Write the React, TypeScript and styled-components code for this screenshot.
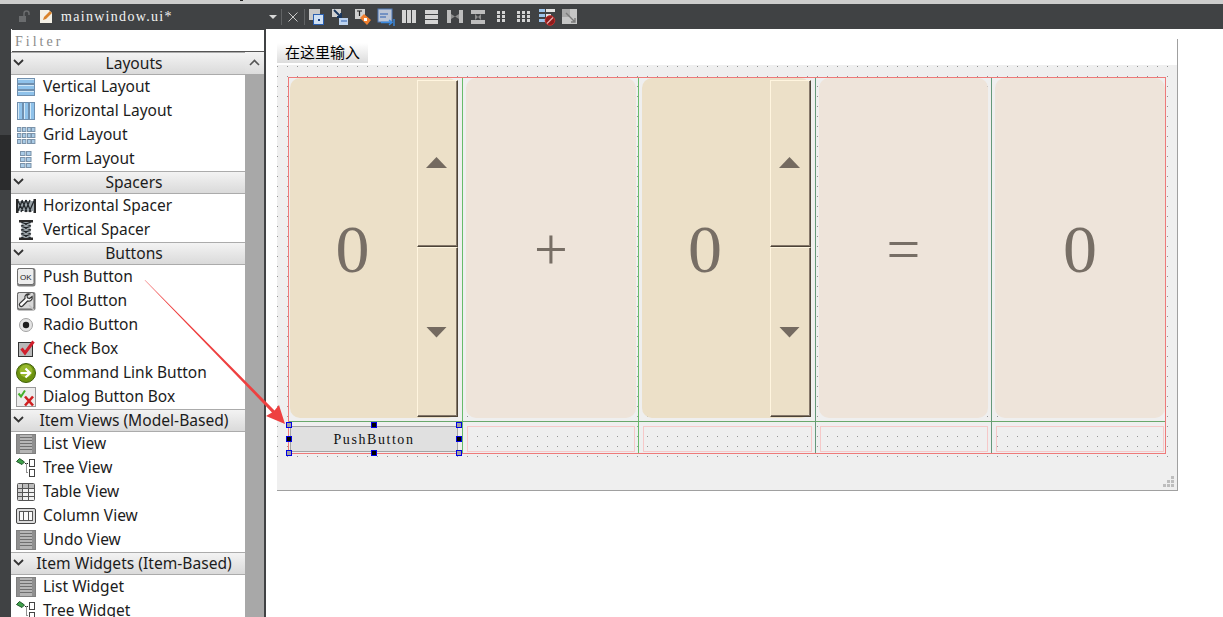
import React from "react";
import styled, { createGlobalStyle } from "styled-components";

const GlobalStyle = createGlobalStyle`
  html, body {
    margin: 0;
    padding: 0;
    background: #fff;
    overflow: hidden;
  }
  * {
    box-sizing: border-box;
  }
`;

const UI_FONT = `"Noto Sans", "Open Sans", sans-serif`;
const CODE_FONT = `"Liberation Serif", serif`;

const Page = styled.div`
  position: relative;
  width: 1223px;
  height: 617px;
  overflow: hidden;
  display: flex;
  flex-direction: column;
  font-family: ${UI_FONT};
`;

const TopStrip = styled.div`
  position: relative;
  height: 4px;
  background: #cdcdcd;
`;

const StripMark = styled.div`
  position: absolute;
  left: 240px;
  top: 0;
  width: 3px;
  height: 1px;
  background: #222;
`;

const Toolbar = styled.div`
  height: 25px;
  background: #404244;
  display: flex;
  align-items: center;
  padding-left: 17px;
`;

const FileName = styled.span`
  width: 208px;
  margin-left: 8px;
  font: 14px ${CODE_FONT};
  letter-spacing: 1.3px;
  color: #f2f2f2;
`;

const Caret = styled.div`
  width: 0;
  height: 0;
  border-left: 4px solid transparent;
  border-right: 4px solid transparent;
  border-top: 4px solid #d8d8d8;
`;

const ToolSep = styled.div<{ $gap: number }>`
  width: 1px;
  height: 16px;
  background: #626466;
  margin-left: ${(p) => p.$gap}px;
`;

const DocIcon = styled.svg`
  margin-left: 9px;
`;

const CloseIcon = styled.svg`
  margin-left: 6px;
`;

const ToolSlot = styled.div`
  width: 23px;
  height: 18px;
  display: flex;
  align-items: center;
  justify-content: center;
`;

const Body = styled.div`
  flex: 1;
  display: flex;
  min-height: 0;
`;

const Rail = styled.div`
  width: 11px;
  display: flex;
  flex-direction: column;
  background: #404244;
`;

const RailDark = styled.div`
  margin-top: 106px;
  height: 55px;
  background: #2b2c2d;
`;

const Sidebar = styled.div`
  width: 255px;
  display: flex;
  flex-direction: column;
  background: #fff;
  border-right: 2px solid #404244;
  overflow: hidden;
`;

const Filter = styled.div`
  height: 23px;
  padding: 4px 0 0 3px;
  border-top: 1px solid #404244;
  border-bottom: 1px solid #555;
  margin-left: 1px;
  font: 14px ${CODE_FONT};
  letter-spacing: 3px;
  color: #8a8a8a;
  background: #fff;
`;

const BoxWrap = styled.div`
  flex: 1;
  display: flex;
  min-height: 0;
`;

const List = styled.div`
  width: 234px;
`;

const CategoryHead = styled.div`
  position: relative;
  height: 23px;
  padding-left: 12px;
  text-align: center;
  font-size: 15.6px;
  line-height: 20px;
  color: #1c1c1c;
  background: linear-gradient(#f3f3f3, #dadada);
  border-top: 1px solid #ababab;
  border-bottom: 1px solid #ababab;
`;

const Chevron = styled.svg`
  position: absolute;
  left: 2px;
  top: 6px;
`;

const Row = styled.div`
  height: 24px;
  display: flex;
  align-items: center;
  padding-left: 5px;
  gap: 7px;
  font-size: 15.5px;
  color: #1c1c1c;
  white-space: nowrap;
`;

const RowLabel = styled.span`
  margin-top: -2px;
`;

const IconBox = styled.svg`
  flex: none;
`;

const ScrollTrack = styled.div`
  flex: 1;
  background: #a8a8a8;
`;

const ScrollUp = styled.div`
  height: 22px;
  display: flex;
  align-items: center;
  justify-content: center;
  background: linear-gradient(#f3f3f3, #dcdcdc);
`;

const Canvas = styled.div`
  flex: 1;
  padding: 10px 0 0 11px;
  background: #fff;
`;

const FormWindow = styled.div`
  position: relative;
  width: 901px;
  height: 452px;
  display: flex;
  flex-direction: column;
  border-right: 1px solid #a0a0a0;
  border-bottom: 1px solid #a0a0a0;
`;

const MenuBar = styled.div`
  height: 26px;
  padding-top: 4px;
`;

const MenuItem = styled.div`
  width: 91px;
  height: 20px;
  padding-left: 8px;
  font: 15px/18px "Noto Sans CJK SC", sans-serif;
  color: #000;
  background: linear-gradient(#fff, #dcdcdc);
`;

const FormBody = styled.div`
  flex: 1;
  background: #efefef;
`;

const DotField = styled.div`
  width: 891px;
  height: 392px;
  padding: 12px 0 0 11px;
  background-image: radial-gradient(circle at 0.5px 0.5px, #959595 0.72px, transparent 0.72px);
  background-size: 10px 10px;
  background-position: 0 1px;
`;

const LayoutGrid = styled.div`
  position: relative;
  width: 878px;
  height: 377px;
  display: grid;
  grid-template-columns: 174px 176px 177px 176px 173px;
  grid-template-rows: 344px 31px;
  border: 1px solid #ee7a7a;
`;

const Cell = styled.div<{ $left: number; $right: number; $dim?: boolean; $last?: boolean; $top?: boolean }>`
  display: flex;
  min-width: 0;
  padding: ${(p) => (p.$top ? "0 0 3px" : "4px 0 1px")};
  padding-left: ${(p) => p.$left}px;
  padding-right: ${(p) => p.$right}px;
  border-right: ${(p) => (p.$last ? "0" : `1px solid ${p.$dim ? "#65987a" : "#68bb6a"}`)};
  border-bottom: ${(p) => (p.$top ? "1px solid #6aa86c" : "0")};
`;

const Tile = styled.div<{ $warm?: boolean }>`
  flex: 1;
  min-width: 0;
  display: flex;
  border-radius: 10px;
  background: ${(p) => (p.$warm ? "#ece0c8" : "#eee4da")};
`;

const Value = styled.div<{ $size?: number }>`
  flex: 1;
  display: flex;
  align-items: center;
  justify-content: center;
  padding-top: 2px;
  font-family: "Liberation Serif", serif;
  font-size: ${(p) => p.$size ?? 68}px;
  color: #776e65;
`;

const Spin = styled.div`
  width: 41px;
  margin: 2px 0 1px 2px;
  display: flex;
  flex-direction: column;
`;

const SpinButton = styled.div<{ $grow: number }>`
  flex: ${(p) => p.$grow} 0 0;
  display: flex;
  justify-content: center;
  align-items: center;
  border-top: 1px solid #fff5df;
  border-left: 1px solid #fff5df;
  border-right: 1px solid #4c4337;
  border-bottom: 1px solid #4c4337;
  box-shadow: inset -1px -1px 0 #85786a;
`;

const Arrow = styled.div<{ $down?: boolean }>`
  width: 21px;
  height: 11px;
  margin-right: 2px;
  background: #746a60;
  clip-path: ${(p) =>
    p.$down ? "polygon(0 0, 100% 0, 50% 100%)" : "polygon(50% 0, 100% 100%, 0 100%)"};
  margin-top: ${(p) => (p.$down ? 0 : -2)}px;
`;

const PushButton = styled.div`
  flex: 1;
  display: flex;
  align-items: center;
  justify-content: center;
  padding-top: 2px;
  background: #e0e0e0;
  border: 1px solid #a4a4a4;
  font: 14px ${CODE_FONT};
  letter-spacing: 1.56px;
  color: #111;
`;

const Placeholder = styled.div`
  flex: 1;
  border: 1px solid #f6c8c8;
`;

const Handle = styled.div<{ $corner?: boolean; $x: number; $y: number }>`
  position: absolute;
  left: ${(p) => p.$x}px;
  top: ${(p) => p.$y}px;
  width: 6px;
  height: 6px;
  border: 1px solid #0000e6;
  background: ${(p) => (p.$corner ? "#a0a0a0" : "#000")};
`;

const Grip = styled.svg`
  position: absolute;
  right: 3px;
  bottom: 3px;
`;

const Overlay = styled.svg`
  position: absolute;
  left: 0;
  top: 0;
  pointer-events: none;
`;

/* sidebar icons, 20x20 */
const Ico: React.FC<{ children: React.ReactNode }> = ({ children }) => (
  <IconBox width="20" height="20" viewBox="0 0 20 20">
    {children}
  </IconBox>
);

const VBoxIcon = () => (
  <Ico>
    {[1, 7, 13].map((y) => (
      <g key={y}>
        <rect x="1.5" y={y + 0.5} width="17" height="5" fill="#8fc2ea" stroke="#6f8fae" />
        <rect x="2" y={y + 1} width="16" height="1" fill="#d3e9f8" />
      </g>
    ))}
  </Ico>
);
const HBoxIcon = () => (
  <Ico>
    {[1, 7, 13].map((x) => (
      <g key={x}>
        <rect x={x + 0.5} y="1.5" width="5" height="17" fill="#8fc2ea" stroke="#6f8fae" />
        <rect x={x + 1} y="2" width="1" height="16" fill="#d3e9f8" />
      </g>
    ))}
  </Ico>
);
const GridIcon = () => (
  <Ico>
    {[2, 8, 14].map((y) =>
      [1, 6, 11, 15].map((x) => (
        <rect key={`${x}-${y}`} x={x + 0.5} y={y + 0.5} width="3.4" height="4" fill="#a9cbe6" stroke="#7b93aa" />
      ))
    )}
  </Ico>
);
const FormIcon = () => (
  <Ico>
    {[2, 8, 14].map((y) =>
      [4, 10].map((x) => (
        <rect key={`${x}-${y}`} x={x + 0.5} y={y + 0.5} width="4.5" height="4" fill="#a9cbe6" stroke="#7b93aa" />
      ))
    )}
  </Ico>
);
const HSpacerIcon = () => (
  <Ico>
    <rect x="0" y="3" width="2.5" height="14" fill="#2a2a2a" />
    <rect x="17.5" y="3" width="2.5" height="14" fill="#2a2a2a" />
    <path d="M2 5h16v10H2z" fill="#9aa3a8" />
    <path d="M2 15l4-10M5 16l5-12M9 16l5-12M13 16l5-11M2 5l5 10M6 4l5 12M10 4l5 12" stroke="#23282c" strokeWidth="1.3" fill="none" />
  </Ico>
);
const VSpacerIcon = () => (
  <Ico>
    <rect x="3" y="0" width="14" height="2.5" fill="#2a2a2a" />
    <rect x="3" y="17.5" width="14" height="2.5" fill="#2a2a2a" />
    <path d="M5.5 2h9v16h-9z" fill="#9aa3a8" />
    <path d="M5 6l10-4M5 10l10-4M5 14l10-4M5 18l10-4M5 2l10 4M5 6l10 4M5 10l10 4M5 14l10 4" stroke="#23282c" strokeWidth="1.3" fill="none" />
  </Ico>
);
const OkIcon = () => (
  <Ico>
    <rect x="1" y="1" width="18.5" height="18.5" rx="2.5" fill="#7f7f7f" />
    <rect x="1.5" y="1.5" width="16.5" height="16" rx="2" fill="#ededed" stroke="#6d6d6d" />
    <text x="9.8" y="12.5" textAnchor="middle" fontSize="8" fontFamily="Liberation Sans, sans-serif" fill="#222">
      OK
    </text>
  </Ico>
);
const ToolIcon = () => (
  <Ico>
    <rect x="1" y="1" width="18.5" height="18.5" rx="2" fill="#858585" />
    <rect x="1.5" y="1.5" width="16.5" height="16.5" rx="2" fill="#d8d8d8" stroke="#666" />
    <path d="M13.5 3c-3-.6-5.2 1.6-4.5 4.5L3.8 12.4c-1.5 1.8 1 4.2 2.8 2.6l5-5c3 .7 5.2-1.6 4.5-4.5l-2.5 2-2.2-.7-.4-2.2z" fill="#fafafa" stroke="#333" strokeWidth="1.2" />
    <path d="M13 14l5 5" stroke="#c4c4c4" strokeWidth="1.5" />
  </Ico>
);
const RadioIcon = () => (
  <Ico>
    <circle cx="10" cy="10" r="6.5" fill="#e4e4e4" stroke="#a3a3a3" />
    <circle cx="10" cy="10" r="3.2" fill="#1d1d1d" />
  </Ico>
);
const CheckIcon = () => (
  <Ico>
    <rect x="2.5" y="3.5" width="14" height="14" fill="#b8b8b8" stroke="#333" />
    <path d="M5.5 9.5l3.5 4.5L17.5 2.5" fill="none" stroke="#d01f2c" strokeWidth="3" />
  </Ico>
);
const LinkIcon = () => (
  <Ico>
    <circle cx="10" cy="10" r="9.5" fill="#6d9310" stroke="#41600a" strokeWidth="1" />
    <circle cx="10" cy="8" r="6.5" fill="#a9c83a" opacity="0.7" />
    <path d="M4.5 10h9M9.5 5.5l4.5 4.5-4.5 4.5" fill="none" stroke="#fff" strokeWidth="2.2" />
  </Ico>
);
const DialogIcon = () => (
  <Ico>
    <rect x="0.5" y="0.5" width="19" height="19" fill="#ececec" stroke="#9a9a9a" />
    <path d="M2.5 6.5l2.5 3 4-6" fill="none" stroke="#45b02b" strokeWidth="2" />
    <path d="M9 9.5l8 9M17 9.5l-8 9" stroke="#cf1f20" strokeWidth="2.6" />
  </Ico>
);
const ListIcon = () => (
  <Ico>
    <rect x="0.5" y="0.5" width="19" height="19" fill="#b5b5b5" stroke="#7f7f7f" />
    <rect x="1" y="1" width="3" height="18" fill="#8f8f8f" />
    <rect x="16" y="1" width="3" height="18" fill="#8f8f8f" />
    {[3, 6, 9, 12, 15].map((y) => (
      <rect key={y} x="4" y={y} width="12" height="1" fill="#6f6f6f" />
    ))}
  </Ico>
);
const TreeIcon = () => (
  <Ico>
    <path d="M0.5 3.5l3-3 5 3.5-2.5 2.5z" fill="#3fa14a" stroke="#20552a" />
    <path d="M9 5.5h3M10.5 5.5v9H12" stroke="#222" strokeDasharray="1 1" fill="none" />
    <rect x="13.5" y="1.5" width="5" height="7" fill="#fff" stroke="#444" />
    <rect x="13.5" y="11.5" width="5" height="7" fill="#fff" stroke="#444" />
  </Ico>
);
const TableIcon = () => (
  <Ico>
    <rect x="1.5" y="1.5" width="17" height="17" rx="1" fill="#f2f2f2" stroke="#555" />
    <rect x="2" y="2" width="16" height="4" fill="#bcbcbc" />
    <rect x="2" y="2" width="4" height="16" fill="#cfcfcf" />
    <path d="M6.5 2v16M12.5 2v16M2 6.5h16M2 10.5h16M2 14.5h16" stroke="#555" />
  </Ico>
);
const ColumnIcon = () => (
  <Ico>
    <rect x="0.5" y="2.5" width="19" height="15" rx="1.5" fill="#dcdcdc" stroke="#444" />
    <rect x="3.5" y="5.5" width="13" height="9" fill="#fafafa" stroke="#555" />
    <path d="M7.5 5.5v9M12.5 5.5v9" stroke="#555" />
  </Ico>
);

/* toolbar icons */
const Tb: React.FC<{ children: React.ReactNode }> = ({ children }) => (
  <IconBox width="18" height="18" viewBox="0 0 18 18">
    {children}
  </IconBox>
);
const EditTool = () => (
  <Tb>
    <rect x="1" y="1" width="11" height="11" fill="#c8c8c8" />
    <rect x="5.5" y="6.5" width="10" height="10" fill="#cfe0f4" stroke="#2a5fb0" />
    <rect x="10" y="11" width="2" height="2" fill="#1a3f80" />
  </Tb>
);
const SignalTool = () => (
  <Tb>
    <rect x="1" y="1" width="9" height="8" fill="#d0d0d0" />
    <rect x="8" y="10" width="9" height="7" fill="#bcd2ee" />
    <path d="M3 2l7 7M10 5v4H6" fill="none" stroke="#17355f" strokeWidth="1.8" />
    <path d="M10 13h6" stroke="#2a5fb0" />
  </Tb>
);
const BuddyTool = () => (
  <Tb>
    <rect x="1" y="1" width="10" height="10" fill="#d0d0d0" />
    <path d="M3 3h5M5.5 3v5" stroke="#222" strokeWidth="1.2" />
    <path d="M6 10l4-4 7 6-4 5z" fill="#f08030" />
    <rect x="10" y="10" width="3" height="3" fill="#fff" />
  </Tb>
);
const TabTool = () => (
  <Tb>
    <rect x="1" y="1" width="14" height="13" fill="#bcc6d6" stroke="#4f78b8" />
    <path d="M3 6h8M3 9h6" stroke="#2a5fb0" />
    <path d="M4 14.5h11M12 12l3 2.5-3 2.5M17 11v7" fill="none" stroke="#3a8ae0" strokeWidth="1.4" />
  </Tb>
);
const BarsH = () => (
  <Tb>
    {[2, 7, 12].map((x) => (
      <rect key={x} x={x} y="2" width="4" height="13" fill="#d4d4d4" />
    ))}
  </Tb>
);
const BarsV = () => (
  <Tb>
    {[2, 7, 12].map((y) => (
      <rect key={y} x="2" y={y} width="13" height="4" fill="#d4d4d4" />
    ))}
  </Tb>
);
const SplitH = () => (
  <Tb>
    <rect x="1" y="2" width="4" height="13" fill="#bdbdbd" />
    <rect x="13" y="2" width="4" height="13" fill="#bdbdbd" />
    <path d="M5 6l4 2.5 4-2.5v5l-4-2.5-4 2.5z" fill="#8e8e8e" />
  </Tb>
);
const SplitV = () => (
  <Tb>
    <rect x="2" y="2" width="14" height="4" fill="#bdbdbd" />
    <rect x="2" y="12" width="14" height="4" fill="#bdbdbd" />
    <path d="M6 6l3 3 3-3v6l-3-3-3 3z" fill="#8e8e8e" />
  </Tb>
);
const DotsTool: React.FC<{ xs: number[]; ys: number[] }> = ({ xs, ys }) => (
  <Tb>
    {ys.map((y) =>
      xs.map((x) => <rect key={`${x}-${y}`} x={x} y={y} width="3" height="3" fill="#d4d4d4" />)
    )}
  </Tb>
);
const BreakTool = () => (
  <Tb>
    <rect x="1" y="1" width="6" height="3" fill="#9cc3ea" />
    <rect x="8" y="1" width="9" height="3" fill="#e2e2e2" />
    <rect x="1" y="6" width="6" height="3" fill="#9cc3ea" />
    <rect x="8" y="6" width="5" height="3" fill="#e2e2e2" />
    <rect x="1" y="11" width="6" height="3" fill="#9cc3ea" />
    <circle cx="12" cy="12.5" r="4.8" fill="#8e1c1c" stroke="#c73030" />
    <path d="M9 15.5l6-6" stroke="#e8b0b0" strokeWidth="1.3" />
  </Tb>
);
const AdjustTool = () => (
  <Tb>
    <rect x="1" y="1" width="15" height="15" fill="#c6c6c6" />
    <rect x="1" y="1" width="8" height="8" fill="#a8a8a8" />
    <path d="M5 5l9 9M14 10v4h-4" fill="none" stroke="#7a7a7a" strokeWidth="1.4" />
  </Tb>
);

const CATEGORIES: { title: string; rows: [string, React.FC][] }[] = [
  {
    title: "Layouts",
    rows: [
      ["Vertical Layout", VBoxIcon],
      ["Horizontal Layout", HBoxIcon],
      ["Grid Layout", GridIcon],
      ["Form Layout", FormIcon],
    ],
  },
  {
    title: "Spacers",
    rows: [
      ["Horizontal Spacer", HSpacerIcon],
      ["Vertical Spacer", VSpacerIcon],
    ],
  },
  {
    title: "Buttons",
    rows: [
      ["Push Button", OkIcon],
      ["Tool Button", ToolIcon],
      ["Radio Button", RadioIcon],
      ["Check Box", CheckIcon],
      ["Command Link Button", LinkIcon],
      ["Dialog Button Box", DialogIcon],
    ],
  },
  {
    title: "Item Views (Model-Based)",
    rows: [
      ["List View", ListIcon],
      ["Tree View", TreeIcon],
      ["Table View", TableIcon],
      ["Column View", ColumnIcon],
      ["Undo View", ListIcon],
    ],
  },
  {
    title: "Item Widgets (Item-Based)",
    rows: [
      ["List Widget", ListIcon],
      ["Tree Widget", TreeIcon],
    ],
  },
];

const HANDLES: [number, number, boolean][] = [
  [-3, 344, true],
  [82, 344, false],
  [167, 344, true],
  [-3, 358, false],
  [167, 358, false],
  [-3, 372, true],
  [82, 372, false],
  [167, 372, true],
];

const Stepper = () => (
  <Spin>
    <SpinButton $grow={167}>
      <Arrow />
    </SpinButton>
    <SpinButton $grow={170}>
      <Arrow $down />
    </SpinButton>
  </Spin>
);

export default function App() {
  return (
    <Page>
      <GlobalStyle />
      <TopStrip>
        <StripMark />
      </TopStrip>
      <Toolbar>
        <svg width="13" height="13" viewBox="0 0 13 13">
          <path d="M2 6h7v6H2z" fill="#6a6c6e" />
          <path d="M7 6V3.5a2.5 2.5 0 0 1 5 0V5" fill="none" stroke="#6a6c6e" strokeWidth="1.5" />
        </svg>
        <DocIcon width="14" height="15" viewBox="0 0 14 15">
          <path d="M1 1h9l3 3v10H1z" fill="#f4f0e6" />
          <path d="M4 11l1-3 6-6 2 2-6 6z" fill="#d9822b" />
        </DocIcon>
        <FileName>mainwindow.ui*</FileName>
        <Caret />
        <ToolSep $gap={4} />
        <CloseIcon width="10" height="10" viewBox="0 0 10 10">
          <path d="M0.5 0.5l9 9M9.5 0.5l-9 9" stroke="#c8c8c8" />
        </CloseIcon>
        <ToolSep $gap={6} />
        <ToolSlot>
          <EditTool />
        </ToolSlot>
        <ToolSlot>
          <SignalTool />
        </ToolSlot>
        <ToolSlot>
          <BuddyTool />
        </ToolSlot>
        <ToolSlot>
          <TabTool />
        </ToolSlot>
        <ToolSlot>
          <BarsH />
        </ToolSlot>
        <ToolSlot>
          <BarsV />
        </ToolSlot>
        <ToolSlot>
          <SplitH />
        </ToolSlot>
        <ToolSlot>
          <SplitV />
        </ToolSlot>
        <ToolSlot>
          <DotsTool xs={[5, 10]} ys={[3, 7, 11]} />
        </ToolSlot>
        <ToolSlot>
          <DotsTool xs={[2, 7, 12]} ys={[3, 7, 11]} />
        </ToolSlot>
        <ToolSlot>
          <BreakTool />
        </ToolSlot>
        <ToolSlot>
          <AdjustTool />
        </ToolSlot>
      </Toolbar>
      <Body>
        <Rail>
          <RailDark />
        </Rail>
        <Sidebar>
          <Filter>Filter</Filter>
          <BoxWrap>
            <List>
              {CATEGORIES.map((cat) => (
                <div key={cat.title}>
                  <CategoryHead>
                    <Chevron width="11" height="8" viewBox="0 0 11 8">
                      <path d="M1 1l4.5 4.5L10 1" fill="none" stroke="#333" strokeWidth="1.8" />
                    </Chevron>
                    {cat.title}
                  </CategoryHead>
                  {cat.rows.map(([label, Icon]) => (
                    <Row key={label}>
                      <Icon />
                      <RowLabel>{label}</RowLabel>
                    </Row>
                  ))}
                </div>
              ))}
            </List>
            <ScrollTrack>
              <ScrollUp>
                <svg width="11" height="8" viewBox="0 0 11 8">
                  <path d="M1 6l4.5-4.5L10 6" fill="none" stroke="#555" strokeWidth="1.6" />
                </svg>
              </ScrollUp>
            </ScrollTrack>
          </BoxWrap>
        </Sidebar>
        <Canvas>
          <FormWindow>
            <MenuBar>
              <MenuItem>在这里输入</MenuItem>
            </MenuBar>
            <FormBody>
              <DotField>
                <LayoutGrid>
                  <Cell $top $left={1} $right={4}>
                    <Tile $warm>
                      <Value>0</Value>
                      <Stepper />
                    </Tile>
                  </Cell>
                  <Cell $top $left={3} $right={2}>
                    <Tile>
                      <Value $size={60}>+</Value>
                    </Tile>
                  </Cell>
                  <Cell $top $left={3} $right={4} $dim>
                    <Tile $warm>
                      <Value>0</Value>
                      <Stepper />
                    </Tile>
                  </Cell>
                  <Cell $top $left={3} $right={3} $dim>
                    <Tile>
                      <Value $size={60}>=</Value>
                    </Tile>
                  </Cell>
                  <Cell $top $left={3} $right={0} $last>
                    <Tile>
                      <Value>0</Value>
                    </Tile>
                  </Cell>
                  <Cell $left={1} $right={4}>
                    <PushButton>PushButton</PushButton>
                  </Cell>
                  <Cell $left={4} $right={3}>
                    <Placeholder />
                  </Cell>
                  <Cell $left={4} $right={3} $dim>
                    <Placeholder />
                  </Cell>
                  <Cell $left={4} $right={3} $dim>
                    <Placeholder />
                  </Cell>
                  <Cell $left={4} $right={1} $last>
                    <Placeholder />
                  </Cell>
                  {HANDLES.map(([x, y, corner]) => (
                    <Handle key={`${x}-${y}`} $x={x} $y={y} $corner={corner} />
                  ))}
                </LayoutGrid>
              </DotField>
            </FormBody>
            <Grip width="11" height="11" viewBox="0 0 11 11">
              <path d="M8 0h3v3H8zM4 4h3v3H4zM8 4h3v3H8zM0 8h3v3H0zM4 8h3v3H4zM8 8h3v3H8z" fill="#bdbdbd" />
            </Grip>
          </FormWindow>
        </Canvas>
      </Body>
      <Overlay width="1223" height="617" viewBox="0 0 1223 617">
        <path d="M144.5 280L145.5 280.5L274.5 410.5L279 405L285 424L266 416L272 412.5Z" fill="#ee4040" />
      </Overlay>
    </Page>
  );
}
